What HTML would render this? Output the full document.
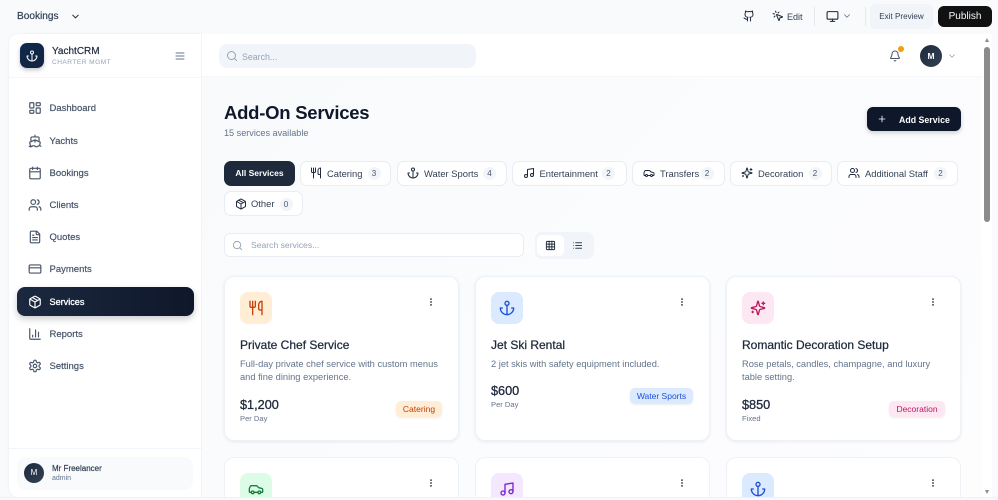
<!DOCTYPE html>
<html lang="en"><head><meta charset="utf-8"><title>Add-On Services</title>
<style>
*{box-sizing:border-box;margin:0;padding:0}
html,body{width:998px;height:500px;overflow:hidden;background:#f8fafc;font-family:"Liberation Sans",sans-serif}
#w{position:relative;width:998px;height:500px;overflow:hidden}
.b{position:absolute}
.t{position:absolute;white-space:nowrap;line-height:20px;height:20px}
.m{-webkit-text-stroke:.2px currentColor}
svg.i{position:absolute;fill:none;stroke:currentColor;stroke-width:2;stroke-linecap:round;stroke-linejoin:round}
.nav{font-size:9.5px;color:#475569;left:49.5px}
.navi{color:#475569;left:28px;width:14px;height:14px}
.chip{position:absolute;height:25px;background:#fff;border:1px solid #e8edf3;border-radius:7px}
.chipt{font-size:9.4px;color:#334155}
.chipi{color:#1e293b;width:12px;height:12px}
.badge{position:absolute;width:13px;height:13px;border-radius:50%;background:#f1f5f9;color:#475569;font-size:8px;line-height:13px;text-align:center}
.card{position:absolute;width:235px;height:165px;background:#fff;border:1px solid #eef1f5;border-radius:10px;box-shadow:0 1px 3px rgba(15,23,42,.08)}
.card.r2{height:40px;border-bottom:0;border-radius:10px 10px 0 0;box-shadow:none}
.ico{position:absolute;width:32px;height:32px;border-radius:8px}
.ico.r2{height:24px;border-radius:8px 8px 0 0}
.ti{font-size:12px;color:#1e293b;-webkit-text-stroke:.25px currentColor}
.de{font-size:9.3px;color:#64748b}
.pr{font-size:12.7px;color:#1e293b;-webkit-text-stroke:.3px currentColor}
.un{font-size:7.6px;color:#64748b}
.tag{position:absolute;height:16px;border-radius:5px;font-size:8.5px;line-height:16px;text-align:center;box-shadow:0 1px 2px rgba(15,23,42,.08)}
svg.dots{color:#1e293b;width:10px;height:10px;fill:currentColor;stroke-width:2.2}
</style></head><body><div id="w">
<svg width="0" height="0" style="position:absolute"><defs>
<symbol id="dash" viewBox="0 0 24 24"><rect x="3" y="3" width="7" height="9" rx="1"/><rect x="14" y="3" width="7" height="5" rx="1"/><rect x="14" y="12" width="7" height="9" rx="1"/><rect x="3" y="16" width="7" height="5" rx="1"/></symbol>
<symbol id="ship" viewBox="0 0 24 24"><path d="M12 10.189V14M12 2v3M19 13V7a2 2 0 0 0-2-2H7a2 2 0 0 0-2 2v6M19.38 20A11.6 11.6 0 0 0 21 14l-8.188-3.639a2 2 0 0 0-1.624 0L3 14a11.6 11.6 0 0 0 2.81 7.76M2 21c.6.5 1.2 1 2.5 1 2.5 0 2.5-2 5-2 1.3 0 1.9.5 2.5 1s1.2 1 2.5 1c2.5 0 2.5-2 5-2 1.3 0 1.9.5 2.5 1"/></symbol>
<symbol id="cal" viewBox="0 0 24 24"><path d="M8 2v4M16 2v4M3 10h18"/><rect x="3" y="4" width="18" height="18" rx="2"/></symbol>
<symbol id="users" viewBox="0 0 24 24"><path d="M16 21v-2a4 4 0 0 0-4-4H6a4 4 0 0 0-4 4v2M22 21v-2a4 4 0 0 0-3-3.87M16 3.13a4 4 0 0 1 0 7.75"/><circle cx="9" cy="7" r="4"/></symbol>
<symbol id="file" viewBox="0 0 24 24"><path d="M15 2H6a2 2 0 0 0-2 2v16a2 2 0 0 0 2 2h12a2 2 0 0 0 2-2V7ZM14 2v4a2 2 0 0 0 2 2h4M10 9H8M16 13H8M16 17H8"/></symbol>
<symbol id="cardi" viewBox="0 0 24 24"><rect x="2" y="5" width="20" height="14" rx="2"/><path d="M2 10h20"/></symbol>
<symbol id="pkg" viewBox="0 0 24 24"><path d="M11 21.73a2 2 0 0 0 2 0l7-4A2 2 0 0 0 21 16V8a2 2 0 0 0-1-1.73l-7-4a2 2 0 0 0-2 0l-7 4A2 2 0 0 0 3 8v8a2 2 0 0 0 1 1.73zM12 22V12M3.29 7 12 12l8.71-5M7.5 4.27l9 5.15"/></symbol>
<symbol id="chart" viewBox="0 0 24 24"><path d="M3 3v16a2 2 0 0 0 2 2h16M18 17V9M13 17V5M8 17v-3"/></symbol>
<symbol id="gear" viewBox="0 0 24 24"><path d="M12.22 2h-.44a2 2 0 0 0-2 2v.18a2 2 0 0 1-1 1.73l-.43.25a2 2 0 0 1-2 0l-.15-.08a2 2 0 0 0-2.73.73l-.22.38a2 2 0 0 0 .73 2.73l.15.1a2 2 0 0 1 1 1.72v.51a2 2 0 0 1-1 1.74l-.15.09a2 2 0 0 0-.73 2.73l.22.38a2 2 0 0 0 2.73.73l.15-.08a2 2 0 0 1 2 0l.43.25a2 2 0 0 1 1 1.73V20a2 2 0 0 0 2 2h.44a2 2 0 0 0 2-2v-.18a2 2 0 0 1 1-1.73l.43-.25a2 2 0 0 1 2 0l.15.08a2 2 0 0 0 2.73-.73l.22-.39a2 2 0 0 0-.73-2.73l-.15-.08a2 2 0 0 1-1-1.74v-.5a2 2 0 0 1 1-1.74l.15-.09a2 2 0 0 0 .73-2.73l-.22-.38a2 2 0 0 0-2.73-.73l-.15.08a2 2 0 0 1-2 0l-.43-.25a2 2 0 0 1-1-1.73V4a2 2 0 0 0-2-2z"/><circle cx="12" cy="12" r="3"/></symbol>
<symbol id="anchor" viewBox="0 0 24 24"><path d="M12 22V8M5 12H2a10 10 0 0 0 20 0h-3"/><circle cx="12" cy="5" r="3"/></symbol>
<symbol id="uten" viewBox="0 0 24 24"><path d="M3 2v7c0 1.1.9 2 2 2h4a2 2 0 0 0 2-2V2M7 2v20M21 15V2a5 5 0 0 0-5 5v6c0 1.1.9 2 2 2h3Zm0 0v7"/></symbol>
<symbol id="music" viewBox="0 0 24 24"><path d="M9 18V5l12-2v13"/><circle cx="6" cy="18" r="3"/><circle cx="18" cy="16" r="3"/></symbol>
<symbol id="car" viewBox="0 0 24 24"><path d="M19 17h2c.6 0 1-.4 1-1v-3c0-.9-.7-1.7-1.5-1.9C18.7 10.6 16 10 16 10s-1.3-1.4-2.2-2.3c-.5-.4-1.1-.7-1.8-.7H5c-.6 0-1.1.4-1.4.9l-1.4 2.9A3.7 3.7 0 0 0 2 12v4c0 .6.4 1 1 1h2M9 17h6"/><circle cx="7" cy="17" r="2"/><circle cx="17" cy="17" r="2"/></symbol>
<symbol id="spark" viewBox="0 0 24 24"><path d="M9.937 15.5A2 2 0 0 0 8.5 14.063l-6.135-1.582a.5.5 0 0 1 0-.962L8.5 9.936A2 2 0 0 0 9.937 8.5l1.582-6.135a.5.5 0 0 1 .963 0L14.063 8.5A2 2 0 0 0 15.5 9.937l6.135 1.581a.5.5 0 0 1 0 .964L15.5 14.063a2 2 0 0 0-1.437 1.437l-1.582 6.135a.5.5 0 0 1-.963 0zM20 3v4M22 5h-4M4 17v2M5 18H3"/></symbol>
<symbol id="bell" viewBox="0 0 24 24"><path d="M10.268 21a2 2 0 0 0 3.464 0M3.262 15.326A1 1 0 0 0 4 17h16a1 1 0 0 0 .74-1.673C19.41 13.956 18 12.499 18 8A6 6 0 0 0 6 8c0 4.499-1.411 5.956-2.738 7.326"/></symbol>
<symbol id="search" viewBox="0 0 24 24"><path d="m21 21-4.3-4.3"/><circle cx="11" cy="11" r="8"/></symbol>
<symbol id="gh" viewBox="0 0 24 24"><path d="M15 22v-4a4.8 4.8 0 0 0-1-3.500c3 0 6-2 6-5.500.08-1.250-.27-2.480-1-3.500.28-1.150.28-2.350 0-3.500 0 0-1 0-3 1.500-2.640-.5-5.360-.5-8 0C6 2 5 2 5 2c-.3 1.150-.3 2.350 0 3.500A5.403 5.403 0 0 0 4 9c0 3.500 3 5.500 6 5.500-.39.49-.68 1.050-.85 1.650-.17.6-.22 1.230-.15 1.850v4M9 18c-4.510 2-5-2-7-2"/></symbol>
<symbol id="mon" viewBox="0 0 24 24"><rect x="2" y="3" width="20" height="14" rx="2"/><path d="M8 21h8M12 17v4"/></symbol>
<symbol id="click" viewBox="0 0 24 24"><path d="M14 4.100 12 6M5.100 8l-2.900-.8M6 12l-1.900 2M7.200 2.200 8 5.100M9.037 9.690a.498.498 0 0 1 .653-.653l11 4.500a.5.5 0 0 1-.074.949l-4.349 1.041a1 1 0 0 0-.74.739l-1.040 4.350a.5.5 0 0 1-.95.074z"/></symbol>
<symbol id="grid" viewBox="0 0 24 24"><rect x="3" y="3" width="18" height="18" rx="2"/><path d="M3 9h18M3 15h18M9 3v18M15 3v18"/></symbol>
<symbol id="list" viewBox="0 0 24 24"><path d="M3 12h.01M3 18h.01M3 6h.01M8 12h13M8 18h13M8 6h13"/></symbol>
<symbol id="menu" viewBox="0 0 24 24"><path d="M4 6h16M4 12h16M4 18h16"/></symbol>
<symbol id="plus" viewBox="0 0 24 24"><path d="M5 12h14M12 5v14"/></symbol>
<symbol id="chev" viewBox="0 0 24 24"><path d="m6 9 6 6 6-6"/></symbol>
<symbol id="dots" viewBox="0 0 24 24"><circle cx="12" cy="5" r="1"/><circle cx="12" cy="12" r="1"/><circle cx="12" cy="19" r="1"/></symbol>
</defs></svg>

<!-- top bar -->
<div class="t m" style="left:17px;top:6.500px;font-size:10.100px;color:#334155">Bookings</div>
<svg class="i" style="left:70px;top:11px;width:11px;height:11px;color:#1e293b"><use href="#chev"/></svg>
<svg class="i" style="left:743px;top:10px;width:12px;height:12px;color:#1e293b"><use href="#gh"/></svg>
<svg class="i" style="left:772px;top:10px;width:12px;height:12px;color:#1e293b"><use href="#click"/></svg>
<div class="t" style="left:787px;top:6.500px;font-size:9px;color:#334155">Edit</div>
<div class="b" style="left:814px;top:7px;width:1px;height:19px;background:#e2e8f0"></div>
<svg class="i" style="left:826px;top:10px;width:13px;height:13px;color:#1e293b"><use href="#mon"/></svg>
<svg class="i" style="left:842px;top:11px;width:10px;height:10px;color:#64748b"><use href="#chev"/></svg>
<div class="b" style="left:865px;top:7px;width:1px;height:19px;background:#e2e8f0"></div>
<div class="b" style="left:870px;top:4px;width:63px;height:25px;background:#f1f5f9;border-radius:6px;font-size:8.100px;line-height:25px;text-align:center;color:#334155">Exit Preview</div>
<div class="b" style="left:938px;top:6px;width:54px;height:21px;background:#111;border-radius:6px;font-size:10px;line-height:21px;text-align:center;color:#f8fafc">Publish</div>

<!-- sidebar -->
<div class="b" style="left:9px;top:34px;width:193px;height:463px;background:#fff;border-right:1px solid #f1f5f9;border-radius:9px 0 0 9px;box-shadow:0 0 2px rgba(15,23,42,.08)"></div>
<div class="b" style="left:9px;top:77px;width:192px;height:1px;background:#f4f6f9"></div>
<div class="b" style="left:20px;top:43px;width:24px;height:25px;border-radius:7px;background:linear-gradient(135deg,#0f2a4d,#12233f);box-shadow:0 2px 4px rgba(15,23,42,.25)"></div>
<svg class="i" style="left:26px;top:50px;width:12px;height:12px;color:#fff"><use href="#anchor"/></svg>
<div class="t m" style="left:52px;top:41.500px;font-size:10px;color:#1e293b">YachtCRM</div>
<div class="t" style="left:52px;top:53px;font-size:6.600px;letter-spacing:.45px;color:#94a3b8">CHARTER MGMT</div>
<svg class="i" style="left:174px;top:50px;width:12px;height:12px;color:#64748b"><use href="#menu"/></svg>

<svg class="i navi" style="top:101px"><use href="#dash"/></svg><div class="t nav m" style="top:99px">Dashboard</div>
<svg class="i navi" style="top:134px"><use href="#ship"/></svg><div class="t nav m" style="top:132px">Yachts</div>
<svg class="i navi" style="top:166px"><use href="#cal"/></svg><div class="t nav m" style="top:164px">Bookings</div>
<svg class="i navi" style="top:198px"><use href="#users"/></svg><div class="t nav m" style="top:196px">Clients</div>
<svg class="i navi" style="top:230px"><use href="#file"/></svg><div class="t nav m" style="top:228px">Quotes</div>
<svg class="i navi" style="top:262px"><use href="#cardi"/></svg><div class="t nav m" style="top:260px">Payments</div>
<div class="b" style="left:17px;top:287px;width:177px;height:29px;border-radius:8px;background:linear-gradient(90deg,#1b2940,#0f172a);box-shadow:0 3px 7px rgba(15,23,42,.22)"></div>
<svg class="i navi" style="top:295px;color:#fff"><use href="#pkg"/></svg><div class="t nav" style="top:292px;color:#fff;font-size:9.100px;-webkit-text-stroke:.3px #fff">Services</div>
<svg class="i navi" style="top:327px"><use href="#chart"/></svg><div class="t nav m" style="top:325px">Reports</div>
<svg class="i navi" style="top:359px"><use href="#gear"/></svg><div class="t nav m" style="top:357px">Settings</div>

<div class="b" style="left:9px;top:448px;width:192px;height:1px;background:#f1f5f9"></div>
<div class="b" style="left:17px;top:457px;width:176px;height:33px;border-radius:9px;background:#f8fafc"></div>
<div class="b" style="left:24px;top:463px;width:20px;height:20px;border-radius:50%;background:linear-gradient(135deg,#1e293b,#334155);color:#fff;font-size:8px;line-height:20px;text-align:center">M</div>
<div class="t m" style="left:52px;top:458.500px;font-size:8px;color:#334155">Mr Freelancer</div>
<div class="t" style="left:52px;top:468.500px;font-size:7px;color:#64748b">admin</div>

<!-- main -->
<div class="b" style="left:202px;top:34px;width:780px;height:463px;background:linear-gradient(135deg,#f8fafc,#fbfcfe 60%,#fdfdfe)"></div>
<div class="b" style="left:202px;top:34px;width:780px;height:43px;background:#fff;border-bottom:1px solid #f5f7fa"></div>
<div class="b" style="left:219px;top:44px;width:257px;height:24px;border-radius:8px;background:#f1f5f9"></div>
<svg class="i" style="left:226px;top:50px;width:12px;height:12px;color:#94a3b8"><use href="#search"/></svg>
<div class="t" style="left:242px;top:46.500px;font-size:8.800px;color:#94a3b8">Search...</div>
<svg class="i" style="left:889px;top:50px;width:12px;height:12px;color:#475569"><use href="#bell"/></svg>
<div class="b" style="left:898px;top:45.500px;width:6px;height:6px;border-radius:50%;background:#f59e0b"></div>
<div class="b" style="left:920px;top:45px;width:22px;height:22px;border-radius:50%;background:linear-gradient(135deg,#1e293b,#334155);color:#fff;font-size:8.500px;font-weight:bold;line-height:22px;text-align:center">M</div>
<svg class="i" style="left:947px;top:51px;width:10px;height:10px;color:#94a3b8"><use href="#chev"/></svg>

<div class="t" style="left:224px;top:102.500px;font-size:18.500px;font-weight:bold;color:#0f172a;letter-spacing:-.25px">Add-On Services</div>
<div class="t" style="left:224px;top:123px;font-size:9.100px;color:#64748b">15 services available</div>
<div class="b" style="left:867px;top:107px;width:94px;height:24px;border-radius:6px;background:#0f172a;box-shadow:0 2px 5px rgba(15,23,42,.2)"></div>
<svg class="i" style="left:877px;top:114px;width:10px;height:10px;color:#fff"><use href="#plus"/></svg>
<div class="t" style="left:899px;top:109.500px;font-size:8.800px;font-weight:bold;color:#fff">Add Service</div>

<!-- chips -->
<div class="b" style="left:224px;top:161px;width:71px;height:25px;border-radius:7px;background:#1e293b;color:#fff;font-size:8.500px;font-weight:bold;line-height:25px;text-align:center">All Services</div>
<div class="chip" style="left:300px;top:161px;width:91px"></div>
<svg class="i chipi" style="left:310px;top:167px"><use href="#uten"/></svg><div class="t chipt" style="left:327px;top:163.500px">Catering</div><div class="badge" style="left:367.500px;top:167px">3</div>
<div class="chip" style="left:397px;top:161px;width:110px"></div>
<svg class="i chipi" style="left:407px;top:167px"><use href="#anchor"/></svg><div class="t chipt" style="left:424px;top:163.500px">Water Sports</div><div class="badge" style="left:483px;top:167px">4</div>
<div class="chip" style="left:512px;top:161px;width:115px"></div>
<svg class="i chipi" style="left:523px;top:167px"><use href="#music"/></svg><div class="t chipt" style="left:539.500px;top:163.500px">Entertainment</div><div class="badge" style="left:602px;top:167px">2</div>
<div class="chip" style="left:632px;top:161px;width:93px"></div>
<svg class="i chipi" style="left:643px;top:167px"><use href="#car"/></svg><div class="t chipt" style="left:660px;top:163.500px">Transfers</div><div class="badge" style="left:700.500px;top:167px">2</div>
<div class="chip" style="left:730px;top:161px;width:102px"></div>
<svg class="i chipi" style="left:741px;top:167px"><use href="#spark"/></svg><div class="t chipt" style="left:758px;top:163.500px">Decoration</div><div class="badge" style="left:808.500px;top:167px">2</div>
<div class="chip" style="left:837px;top:161px;width:121px"></div>
<svg class="i chipi" style="left:848px;top:167px"><use href="#users"/></svg><div class="t chipt" style="left:865px;top:163.500px">Additional Staff</div><div class="badge" style="left:934px;top:167px">2</div>
<div class="chip" style="left:224px;top:191px;width:79px"></div>
<svg class="i chipi" style="left:235px;top:198px"><use href="#pkg"/></svg><div class="t chipt" style="left:251px;top:194px">Other</div><div class="badge" style="left:279.500px;top:197.500px">0</div>

<!-- filter -->
<div class="b" style="left:224px;top:233px;width:300px;height:24px;border-radius:6px;background:#fff;border:1px solid #e8edf3"></div>
<svg class="i" style="left:232px;top:240px;width:11px;height:11px;color:#94a3b8"><use href="#search"/></svg>
<div class="t" style="left:251px;top:235px;font-size:8.600px;color:#94a3b8">Search services...</div>
<div class="b" style="left:535px;top:232px;width:59px;height:27px;border-radius:7px;background:#f1f5f9"></div>
<div class="b" style="left:537px;top:235px;width:27px;height:21px;border-radius:5px;background:#fff"></div>
<svg class="i" style="left:545px;top:240px;width:11px;height:11px;color:#1e293b"><use href="#grid"/></svg>
<svg class="i" style="left:572px;top:240px;width:11px;height:11px;color:#334155"><use href="#list"/></svg>

<!-- cards row 1 -->
<div class="card" style="left:224px;top:276px"></div>
<div class="ico" style="left:240px;top:292px;background:#ffedd5"></div>
<svg class="i" style="left:248px;top:300px;width:16px;height:16px;color:#c2410c"><use href="#uten"/></svg>
<svg class="i dots" style="left:426px;top:297px"><use href="#dots"/></svg>
<div class="t ti" style="left:240px;top:334.500px">Private Chef Service</div>
<div class="t de" style="left:240px;top:354px">Full-day private chef service with custom menus</div>
<div class="t de" style="left:240px;top:367px">and fine dining experience.</div>
<div class="t pr" style="left:240px;top:395px">$1,200</div>
<div class="t un" style="left:240px;top:409px">Per Day</div>
<div class="tag" style="left:396px;top:401px;width:46px;background:#ffedd5;color:#c2410c">Catering</div>

<div class="card" style="left:475px;top:276px"></div>
<div class="ico" style="left:491px;top:292px;background:#dbeafe"></div>
<svg class="i" style="left:499px;top:300px;width:16px;height:16px;color:#1d4ed8"><use href="#anchor"/></svg>
<svg class="i dots" style="left:677px;top:297px"><use href="#dots"/></svg>
<div class="t ti" style="left:491px;top:334.500px">Jet Ski Rental</div>
<div class="t de" style="left:491px;top:354px">2 jet skis with safety equipment included.</div>
<div class="t pr" style="left:491px;top:381px">$600</div>
<div class="t un" style="left:491px;top:395px">Per Day</div>
<div class="tag" style="left:630px;top:388px;width:63px;background:#dbeafe;color:#1d4ed8">Water Sports</div>

<div class="card" style="left:726px;top:276px"></div>
<div class="ico" style="left:742px;top:292px;background:#fce7f3"></div>
<svg class="i" style="left:750px;top:300px;width:16px;height:16px;color:#be185d"><use href="#spark"/></svg>
<svg class="i dots" style="left:928px;top:297px"><use href="#dots"/></svg>
<div class="t ti" style="left:742px;top:334.500px">Romantic Decoration Setup</div>
<div class="t de" style="left:742px;top:354px">Rose petals, candles, champagne, and luxury</div>
<div class="t de" style="left:742px;top:367px">table setting.</div>
<div class="t pr" style="left:742px;top:395px">$850</div>
<div class="t un" style="left:742px;top:409px">Fixed</div>
<div class="tag" style="left:889px;top:401px;width:56px;background:#fce7f3;color:#be185d">Decoration</div>

<!-- cards row 2 -->
<div class="card r2" style="left:224px;top:457px"></div>
<div class="ico r2" style="left:240px;top:473px;background:#dcfce7"></div>
<svg class="i" style="left:248px;top:481px;width:16px;height:16px;color:#15803d"><use href="#car"/></svg>
<svg class="i dots" style="left:426px;top:478px"><use href="#dots"/></svg>
<div class="card r2" style="left:475px;top:457px"></div>
<div class="ico r2" style="left:491px;top:473px;background:#f3e8ff"></div>
<svg class="i" style="left:499px;top:481px;width:16px;height:16px;color:#7e22ce"><use href="#music"/></svg>
<svg class="i dots" style="left:677px;top:478px"><use href="#dots"/></svg>
<div class="card r2" style="left:726px;top:457px"></div>
<div class="ico r2" style="left:742px;top:473px;background:#dbeafe"></div>
<svg class="i" style="left:750px;top:481px;width:16px;height:16px;color:#1d4ed8"><use href="#anchor"/></svg>
<svg class="i dots" style="left:928px;top:478px"><use href="#dots"/></svg>

<!-- scrollbar + bottom -->
<div class="b" style="left:982px;top:34px;width:10px;height:463px;background:#fff"></div>
<div class="b" style="left:984px;top:47px;width:6px;height:175px;border-radius:3px;background:#8b8b8b"></div>
<div class="b" style="left:984.500px;top:38px;width:0;height:0;border-left:2.500px solid transparent;border-right:2.500px solid transparent;border-bottom:4px solid #8b8b8b"></div>
<div class="b" style="left:984.500px;top:490px;width:0;height:0;border-left:2.500px solid transparent;border-right:2.500px solid transparent;border-top:4px solid #8b8b8b"></div>
<div class="b" style="left:0;top:497px;width:998px;height:3px;background:#f8fafc;border-top:1px solid #eef1f5"></div>
</div></body></html>
